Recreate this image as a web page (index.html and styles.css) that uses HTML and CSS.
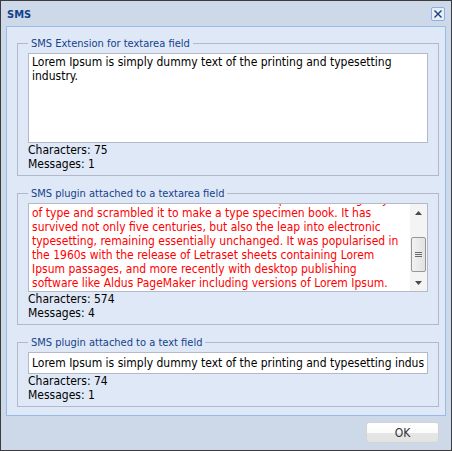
FILE: index.html
```html
<!DOCTYPE html>
<html lang="en">
<head>
    <meta charset="UTF-8">
    <title>SMS</title>
    <link rel="stylesheet" href="styles.css">
</head>
<body>
    <div class="window">
        <div class="window-header">
            <span class="window-title">SMS</span>
            <button class="tool-close" title="Close">
                <svg width="10" height="10" viewBox="0 0 10 10">
                    <path d="M1.5 1.5 L8.5 8.5 M8.5 1.5 L1.5 8.5" stroke="#1c3f7c" stroke-width="1.4" fill="none"/>
                </svg>
            </button>
        </div>

        <div class="window-body">
            <fieldset class="sms-field">
                <legend>SMS Extension for textarea field</legend>
                <textarea class="sms-input sms-area">Lorem Ipsum is simply dummy text of the printing and typesetting industry.</textarea>
                <div class="sms-counter">Characters: 75</div>
                <div class="sms-counter">Messages: 1</div>
            </fieldset>

            <fieldset class="sms-field">
                <legend>SMS plugin attached to a textarea field</legend>
                <div class="scroll-box">
                    <textarea class="sms-area sms-long" id="longText">Lorem Ipsum is simply dummy text of the printing and typesetting industry. Lorem Ipsum has been the industry's standard dummy text ever since the 1500s, when an unknown printer took a galley of type and scrambled it to make a type specimen book. It has survived not only five centuries, but also the leap into electronic typesetting, remaining essentially unchanged. It was popularised in the 1960s with the release of Letraset sheets containing Lorem Ipsum passages, and more recently with desktop publishing software like Aldus PageMaker including versions of Lorem Ipsum.</textarea>
                    <div class="scrollbar">
                        <div class="scroll-btn">
                            <svg width="7" height="4" viewBox="0 0 7 4"><path d="M0 4 L3.5 0 L7 4 Z" fill="#4a4a4a"/></svg>
                        </div>
                        <div class="scroll-track">
                            <div class="scroll-thumb">
                                <span></span><span></span><span></span>
                            </div>
                        </div>
                        <div class="scroll-btn">
                            <svg width="7" height="4" viewBox="0 0 7 4"><path d="M0 0 L7 0 L3.5 4 Z" fill="#4a4a4a"/></svg>
                        </div>
                    </div>
                </div>
                <div class="sms-counter">Characters: 574</div>
                <div class="sms-counter">Messages: 4</div>
            </fieldset>

            <fieldset class="sms-field">
                <legend>SMS plugin attached to a text field</legend>
                <input type="text" class="sms-input sms-text" value="Lorem Ipsum is simply dummy text of the printing and typesetting industry.">
                <div class="sms-counter">Characters: 74</div>
                <div class="sms-counter">Messages: 1</div>
            </fieldset>
        </div>

        <div class="window-footer">
            <button class="btn-ok">OK</button>
        </div>
    </div>

    <script src="app.js"></script>
</body>
</html>
```

FILE: styles.css
```css
body {
    margin: 0;
    font-family: "DejaVu Sans Condensed", "Liberation Sans", sans-serif;
    font-size: 12px;
    background-color: #ffffff;
}

.window {
    width: 452px;
    height: 451px;
    box-sizing: border-box;
    border: 1px solid #3c3c3c;
    background-color: #cdd9e8;
    display: flex;
    flex-direction: column;
}

.window-header {
    height: 25px;
    display: flex;
    align-items: center;
    justify-content: space-between;
    padding: 0 6px 0 6px;
}

.window-title {
    font-weight: bold;
    font-size: 11px;
    color: #15428b;
    padding-top: 2px;
}

.tool-close {
    width: 14px;
    height: 14px;
    padding: 0;
    margin-top: 1px;
    border: 1px solid #8eaedd;
    border-radius: 2px;
    background-color: #e6eef9;
    display: flex;
    align-items: center;
    justify-content: center;
}

.window-body {
    height: 390px;
    box-sizing: border-box;
    margin: 0 5px;
    padding: 10px 6px 0 10px;
    background-color: #dfe8f6;
    border: 1px solid #99bbe8;
}

.sms-field {
    margin: 0 0 11px 0;
    padding: 3px 10px 4px 10px;
    border: 1px solid #b5b8c8;
}

.sms-field legend {
    font-size: 11px;
    line-height: 13px;
    color: #15428b;
    padding: 0 3px;
}

.sms-input {
    display: block;
    width: 100%;
    box-sizing: border-box;
    margin: 0;
    border: 1px solid #b5b8c8;
    background-color: #ffffff;
    font-family: inherit;
    font-size: 12px;
    color: #000000;
    outline: none;
}

.sms-area {
    height: 90px;
    padding: 1px 3px;
    line-height: 14px;
    resize: none;
    overflow: hidden;
}

.sms-text {
    height: 22px;
    padding: 0 3px;
}

.sms-counter {
    line-height: 14px;
    color: #000000;
}

/* textarea with the classic scrollbar */
.scroll-box {
    display: flex;
    height: 89px;
    box-sizing: border-box;
    border: 1px solid #b5b8c8;
    background-color: #ffffff;
}

.sms-long {
    flex: 1;
    height: 100%;
    box-sizing: border-box;
    margin: 0;
    border: none;
    padding: 0 8px 1px 3px;
    font-family: inherit;
    font-size: 12px;
    color: #ff0000;
    outline: none;
}

.scrollbar {
    width: 17px;
    display: flex;
    flex-direction: column;
    background-color: #f4f4f4;
}

.scroll-btn {
    height: 17px;
    display: flex;
    align-items: center;
    justify-content: center;
}

.scroll-track {
    flex: 1;
    display: flex;
    flex-direction: column;
    justify-content: flex-end;
    padding: 0 1px 2px 1px;
}

.scroll-thumb {
    height: 33px;
    border: 1px solid #979797;
    border-radius: 2px;
    background: linear-gradient(to right, #f2f2f2, #e2e2e2);
    display: flex;
    flex-direction: column;
    align-items: center;
    justify-content: center;
    gap: 1px;
}

.scroll-thumb span {
    width: 7px;
    height: 1px;
    background-color: #6a6a6a;
}

.window-footer {
    flex: 1;
    display: flex;
    justify-content: flex-end;
    align-items: flex-start;
    padding: 6px 12px 0 0;
}

.btn-ok {
    width: 73px;
    height: 21px;
    border: 1px solid #d3d3d3;
    border-radius: 3px;
    background: linear-gradient(to bottom, #ffffff 0%, #fbfbfb 50%, #e6e6e6 50%, #e3e3e3 100%);
    font-family: inherit;
    font-size: 12px;
    color: #333333;
    padding: 0;
}
```

FILE: app.js
```js
const longText = document.getElementById('longText');
longText.scrollTop = longText.scrollHeight;
```
